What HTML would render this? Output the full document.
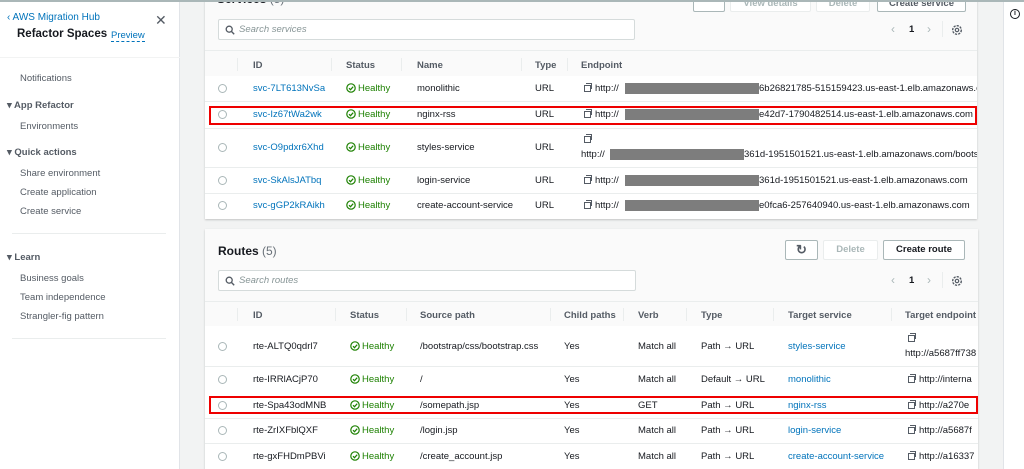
<!DOCTYPE html>
<html><head><meta charset="utf-8"><style>
*{box-sizing:border-box;margin:0;padding:0}
html{overflow:hidden;width:1024px;height:469px}
body{width:1024px;height:469px;overflow:hidden;font-family:"Liberation Sans",sans-serif;font-size:9.5px;color:#16191f;background:#f2f3f3;position:relative}
.a{position:absolute;white-space:nowrap}
.side{position:absolute;left:0;top:0;width:180px;height:469px;background:#fff;border-right:1px solid #e1e4e8}
.nav{color:#545b64}
.navh{font-weight:bold;color:#545b64}
.card{position:absolute;background:#fafafa;box-shadow:0 1px 2px rgba(0,0,0,.2);overflow:hidden}
.th{position:absolute;left:0;right:0;background:#fafafa;font-weight:bold;color:#545b64}
.radio{position:absolute;width:9px;height:9px;border:1px solid #aab7b8;border-radius:50%;background:#fff}
.lnk{color:#0073bb}
.ok{color:#1d8102}
.chk{display:inline-block;width:10px;height:10px;margin-right:2px;vertical-align:-2px}
.red{position:absolute;border:2px solid #e00;}
.bar{position:absolute;background:#7d7d7d;height:11px}
.search{position:absolute;background:#fff;border:1px solid #d5dbdb;border-radius:2px;color:#879596;font-style:italic;padding-left:20px;line-height:19px}
.btn{position:absolute;background:#fff;border:1px solid #aab7b8;border-radius:2px;font-weight:bold;text-align:center;line-height:18px;color:#545b64}
.cp{display:inline-block;width:7px;height:7px;border:1px solid #545b64;margin-right:4px;position:relative;vertical-align:-1px}
.cp:after{content:"";position:absolute;left:1px;top:-3px;width:5px;height:5px;border-top:1px solid #545b64;border-right:1px solid #545b64}
.sep{position:absolute;width:1px;height:13px;background:#eaeded}
</style></head><body>
<svg width="0" height="0" style="position:absolute"><defs>
<symbol id="ck" viewBox="0 0 10 10"><circle cx="5" cy="5" r="4.2" fill="none" stroke="#1d8102" stroke-width="1.2"/><path d="M3 5.2l1.5 1.5 2.7-3" fill="none" stroke="#1d8102" stroke-width="1.2"/></symbol>
<symbol id="sr" viewBox="0 0 10 10"><circle cx="4.2" cy="4.2" r="3" fill="none" stroke="#545b64" stroke-width="1.3"/><path d="M6.4 6.4l2.8 2.8" stroke="#545b64" stroke-width="1.4"/></symbol>
<symbol id="gr" viewBox="0 0 12 12"><circle cx="6" cy="6" r="4.3" fill="none" stroke="#545b64" stroke-width="1.4" stroke-dasharray="2.2 1.1"/><circle cx="6" cy="6" r="1.7" fill="none" stroke="#545b64" stroke-width="1.2"/></symbol>
</defs></svg>
<div class="a" style="left:0;top:0;width:1024px;height:2px;background:#aab7b8;z-index:5"></div>
<div class="side">
 <div class="a" style="left:7px;top:12px;color:#0073bb;font-size:10px">‹ AWS Migration Hub</div>
 <div class="a" style="left:17px;top:28px;font-size:11.5px;font-weight:bold">Refactor Spaces</div>
 <div class="a" style="left:111px;top:30px;color:#0073bb;font-size:9.5px;border-bottom:1px dashed #0073bb">Preview</div>
 <div class="a" style="left:155px;top:12px;font-size:14px;color:#545b64">✕</div>
 <div class="a" style="left:0;top:57px;width:180px;height:1px;background:#f2f3f3"></div>
 <div class="a nav" style="left:20px;top:73px">Notifications</div>
 <div class="a navh" style="left:7px;top:100px">▾ App Refactor</div>
 <div class="a nav" style="left:20px;top:121px">Environments</div>
 <div class="a navh" style="left:7px;top:147px">▾ Quick actions</div>
 <div class="a nav" style="left:20px;top:168px">Share environment</div>
 <div class="a nav" style="left:20px;top:187px">Create application</div>
 <div class="a nav" style="left:20px;top:206px">Create service</div>
 <div class="a" style="left:12px;top:233px;width:154px;height:1px;background:#eaeded"></div>
 <div class="a navh" style="left:7px;top:252px">▾ Learn</div>
 <div class="a nav" style="left:20px;top:273px">Business goals</div>
 <div class="a nav" style="left:20px;top:292px">Team independence</div>
 <div class="a nav" style="left:20px;top:311px">Strangler-fig pattern</div>
 <div class="a" style="left:12px;top:338px;width:154px;height:1px;background:#eaeded"></div>
</div>
<div class="a" style="left:1003px;top:0;width:21px;height:469px;background:#fff;border-left:1px solid #e1e4e8"></div>
<div class="a" style="left:1010px;top:9px;width:10px;height:10px;border:1px solid #16191f;border-radius:50%;font-size:7px;text-align:center;line-height:8px;font-weight:bold">i</div>

<div class="card" style="left:205px;top:-10px;width:772px;height:229px">
 <div class="a" style="left:12px;top:2px;font-size:12px;font-weight:bold">Services <span style="font-weight:normal;color:#687078">(5)</span></div>
 <div class="btn" style="left:488px;top:4px;width:32px;height:18px"></div>
 <div class="btn" style="left:525px;top:4px;width:81px;height:18px;color:#aab7b8;border-color:#eaeded">View details</div>
 <div class="btn" style="left:611px;top:4px;width:54px;height:18px;color:#aab7b8;border-color:#eaeded">Delete</div>
 <div class="btn" style="left:672px;top:4px;width:89px;height:18px">Create service</div>
 <div class="search" style="left:13px;top:29px;width:417px;height:21px">Search services</div>
 <svg class="a" style="left:20px;top:35px" width="10" height="10"><use href="#sr"/></svg>
 <div class="a" style="left:686px;top:32px;color:#aab7b8;font-size:12px">‹</div>
 <div class="a" style="left:704px;top:34px;font-weight:bold">1</div>
 <div class="a" style="left:722px;top:32px;color:#aab7b8;font-size:12px">›</div>
 <div class="a" style="left:737px;top:31px;width:1px;height:16px;background:#eaeded"></div>
 <svg class="a" style="left:746px;top:34px" width="12" height="12"><use href="#gr"/></svg>
 <div class="th" style="top:60px;height:26px;border-top:1px solid #eaeded">
  <span class="a" style="left:48px;top:9px">ID</span><span class="a" style="left:141px;top:9px">Status</span><span class="a" style="left:212px;top:9px">Name</span><span class="a" style="left:330px;top:9px">Type</span><span class="a" style="left:376px;top:9px">Endpoint</span>
  <span class="sep" style="left:32px;top:7px"></span><span class="sep" style="left:126px;top:7px"></span><span class="sep" style="left:196px;top:7px"></span><span class="sep" style="left:316px;top:7px"></span><span class="sep" style="left:362px;top:7px"></span>
 </div>
</div>
<div class="a" style="left:205px;top:76px;width:772px;height:143px;background:#fff"></div>
<div class="a" style="left:205px;top:101px;width:772px;height:1px;background:#eaeded"></div>
<div class="a" style="left:205px;top:128px;width:772px;height:1px;background:#eaeded"></div>
<div class="a" style="left:205px;top:167px;width:772px;height:1px;background:#eaeded"></div>
<div class="a" style="left:205px;top:193px;width:772px;height:1px;background:#eaeded"></div>

<div class="radio" style="left:218px;top:84px"></div><div class="a lnk" style="left:253px;top:83px">svc-7LT613NvSa</div><div class="a ok" style="left:346px;top:83px"><svg class="chk"><use href="#ck"/></svg>Healthy</div><div class="a" style="left:417px;top:83px">monolithic</div><div class="a" style="left:535px;top:83px">URL</div><div class="a" style="left:584px;top:83px"><span class="cp"></span>http://</div><div class="bar" style="left:625px;top:83px;width:134px"></div><div class="a" style="left:759px;top:83px;width:218px;overflow:hidden">6b26821785-515159423.us-east-1.elb.amazonaws.com</div>

<div class="radio" style="left:218px;top:110px"></div><div class="a lnk" style="left:253px;top:109px">svc-Iz67tWa2wk</div><div class="a ok" style="left:346px;top:109px"><svg class="chk"><use href="#ck"/></svg>Healthy</div><div class="a" style="left:417px;top:109px">nginx-rss</div><div class="a" style="left:535px;top:109px">URL</div><div class="a" style="left:584px;top:109px"><span class="cp"></span>http://</div><div class="bar" style="left:625px;top:109px;width:134px"></div><div class="a" style="left:759px;top:109px">e42d7-1790482514.us-east-1.elb.amazonaws.com</div>

<div class="radio" style="left:218px;top:143px"></div><div class="a lnk" style="left:253px;top:142px">svc-O9pdxr6Xhd</div><div class="a ok" style="left:346px;top:142px"><svg class="chk"><use href="#ck"/></svg>Healthy</div><div class="a" style="left:417px;top:142px">styles-service</div><div class="a" style="left:535px;top:142px">URL</div><div class="a" style="left:584px;top:134px"><span class="cp"></span></div><div class="a" style="left:581px;top:149px">http://</div><div class="bar" style="left:610px;top:149px;width:134px"></div><div class="a" style="left:744px;top:149px;width:233px;overflow:hidden">361d-1951501521.us-east-1.elb.amazonaws.com/bootstrap</div>

<div class="radio" style="left:218px;top:176px"></div><div class="a lnk" style="left:253px;top:175px">svc-SkAlsJATbq</div><div class="a ok" style="left:346px;top:175px"><svg class="chk"><use href="#ck"/></svg>Healthy</div><div class="a" style="left:417px;top:175px">login-service</div><div class="a" style="left:535px;top:175px">URL</div><div class="a" style="left:584px;top:175px"><span class="cp"></span>http://</div><div class="bar" style="left:625px;top:175px;width:134px"></div><div class="a" style="left:759px;top:175px">361d-1951501521.us-east-1.elb.amazonaws.com</div>

<div class="radio" style="left:218px;top:201px"></div><div class="a lnk" style="left:253px;top:200px">svc-gGP2kRAikh</div><div class="a ok" style="left:346px;top:200px"><svg class="chk"><use href="#ck"/></svg>Healthy</div><div class="a" style="left:417px;top:200px">create-account-service</div><div class="a" style="left:535px;top:200px">URL</div><div class="a" style="left:584px;top:200px"><span class="cp"></span>http://</div><div class="bar" style="left:625px;top:200px;width:134px"></div><div class="a" style="left:759px;top:200px">e0fca6-257640940.us-east-1.elb.amazonaws.com</div>

<div class="red" style="left:209px;top:106px;width:768px;height:19px"></div>

<div class="card" style="left:205px;top:229px;width:773px;height:240px">
 <div class="a" style="left:13px;top:15px;font-size:12px;font-weight:bold">Routes <span style="font-weight:normal;color:#687078">(5)</span></div>
 <div class="btn" style="left:580px;top:11px;width:33px;height:20px;font-size:13px;line-height:17px;color:#545b64">↻</div>
 <div class="btn" style="left:618px;top:11px;width:55px;height:20px;color:#aab7b8;border-color:#eaeded">Delete</div>
 <div class="btn" style="left:678px;top:11px;width:82px;height:20px;color:#16191f">Create route</div>
 <div class="search" style="left:13px;top:41px;width:418px;height:21px">Search routes</div>
 <svg class="a" style="left:20px;top:47px" width="10" height="10"><use href="#sr"/></svg>
 <div class="a" style="left:686px;top:44px;color:#aab7b8;font-size:12px">‹</div>
 <div class="a" style="left:704px;top:46px;font-weight:bold">1</div>
 <div class="a" style="left:722px;top:44px;color:#aab7b8;font-size:12px">›</div>
 <div class="a" style="left:737px;top:43px;width:1px;height:16px;background:#eaeded"></div>
 <svg class="a" style="left:746px;top:46px" width="12" height="12"><use href="#gr"/></svg>
 <div class="th" style="top:72px;height:25px;border-top:1px solid #eaeded">
  <span class="a" style="left:48px;top:8px">ID</span><span class="a" style="left:145px;top:8px">Status</span><span class="a" style="left:215px;top:8px">Source path</span><span class="a" style="left:359px;top:8px">Child paths</span><span class="a" style="left:433px;top:8px">Verb</span><span class="a" style="left:496px;top:8px">Type</span><span class="a" style="left:583px;top:8px">Target service</span><span class="a" style="left:700px;top:8px">Target endpoint</span>
  <span class="sep" style="left:32px;top:6px"></span><span class="sep" style="left:130px;top:6px"></span><span class="sep" style="left:201px;top:6px"></span><span class="sep" style="left:345px;top:6px"></span><span class="sep" style="left:418px;top:6px"></span><span class="sep" style="left:481px;top:6px"></span><span class="sep" style="left:568px;top:6px"></span><span class="sep" style="left:686px;top:6px"></span>
 </div>
</div>
<div class="a" style="left:205px;top:326px;width:773px;height:143px;background:#fff"></div>
<div class="a" style="left:205px;top:366px;width:773px;height:1px;background:#eaeded"></div>
<div class="a" style="left:205px;top:443px;width:773px;height:1px;background:#eaeded"></div>
<div class="a" style="left:205px;top:418px;width:773px;height:1px;background:#eaeded"></div>

<div class="radio" style="left:218px;top:342px"></div><div class="a" style="left:253px;top:341px">rte-ALTQ0qdrl7</div><div class="a ok" style="left:350px;top:341px"><svg class="chk"><use href="#ck"/></svg>Healthy</div><div class="a" style="left:420px;top:341px">/bootstrap/css/bootstrap.css</div><div class="a" style="left:564px;top:341px">Yes</div><div class="a" style="left:638px;top:341px">Match all</div><div class="a" style="left:701px;top:341px">Path → URL</div><div class="a lnk" style="left:788px;top:341px">styles-service</div><div class="a" style="left:908px;top:333px"><span class="cp"></span></div><div class="a" style="left:905px;top:348px;width:73px;overflow:hidden">http://a5687ff738</div>

<div class="radio" style="left:218px;top:375px"></div><div class="a" style="left:253px;top:374px">rte-IRRlACjP70</div><div class="a ok" style="left:350px;top:374px"><svg class="chk"><use href="#ck"/></svg>Healthy</div><div class="a" style="left:420px;top:374px">/</div><div class="a" style="left:564px;top:374px">Yes</div><div class="a" style="left:638px;top:374px">Match all</div><div class="a" style="left:701px;top:374px">Default → URL</div><div class="a lnk" style="left:788px;top:374px">monolithic</div><div class="a" style="left:908px;top:374px;width:70px;overflow:hidden"><span class="cp"></span>http://interna</div>

<div class="radio" style="left:218px;top:401px"></div><div class="a" style="left:253px;top:400px">rte-Spa43odMNB</div><div class="a ok" style="left:350px;top:400px"><svg class="chk"><use href="#ck"/></svg>Healthy</div><div class="a" style="left:420px;top:400px">/somepath.jsp</div><div class="a" style="left:564px;top:400px">Yes</div><div class="a" style="left:638px;top:400px">GET</div><div class="a" style="left:701px;top:400px">Path → URL</div><div class="a lnk" style="left:788px;top:400px">nginx-rss</div><div class="a" style="left:908px;top:400px;width:70px;overflow:hidden"><span class="cp"></span>http://a270e</div>

<div class="radio" style="left:218px;top:426px"></div><div class="a" style="left:253px;top:425px">rte-ZrIXFblQXF</div><div class="a ok" style="left:350px;top:425px"><svg class="chk"><use href="#ck"/></svg>Healthy</div><div class="a" style="left:420px;top:425px">/login.jsp</div><div class="a" style="left:564px;top:425px">Yes</div><div class="a" style="left:638px;top:425px">Match all</div><div class="a" style="left:701px;top:425px">Path → URL</div><div class="a lnk" style="left:788px;top:425px">login-service</div><div class="a" style="left:908px;top:425px;width:70px;overflow:hidden"><span class="cp"></span>http://a5687f</div>

<div class="radio" style="left:218px;top:452px"></div><div class="a" style="left:253px;top:451px">rte-gxFHDmPBVi</div><div class="a ok" style="left:350px;top:451px"><svg class="chk"><use href="#ck"/></svg>Healthy</div><div class="a" style="left:420px;top:451px">/create_account.jsp</div><div class="a" style="left:564px;top:451px">Yes</div><div class="a" style="left:638px;top:451px">Match all</div><div class="a" style="left:701px;top:451px">Path → URL</div><div class="a lnk" style="left:788px;top:451px">create-account-service</div><div class="a" style="left:908px;top:451px;width:70px;overflow:hidden"><span class="cp"></span>http://a16337</div>

<div class="red" style="left:209px;top:396px;width:769px;height:18px"></div>
</body></html>
